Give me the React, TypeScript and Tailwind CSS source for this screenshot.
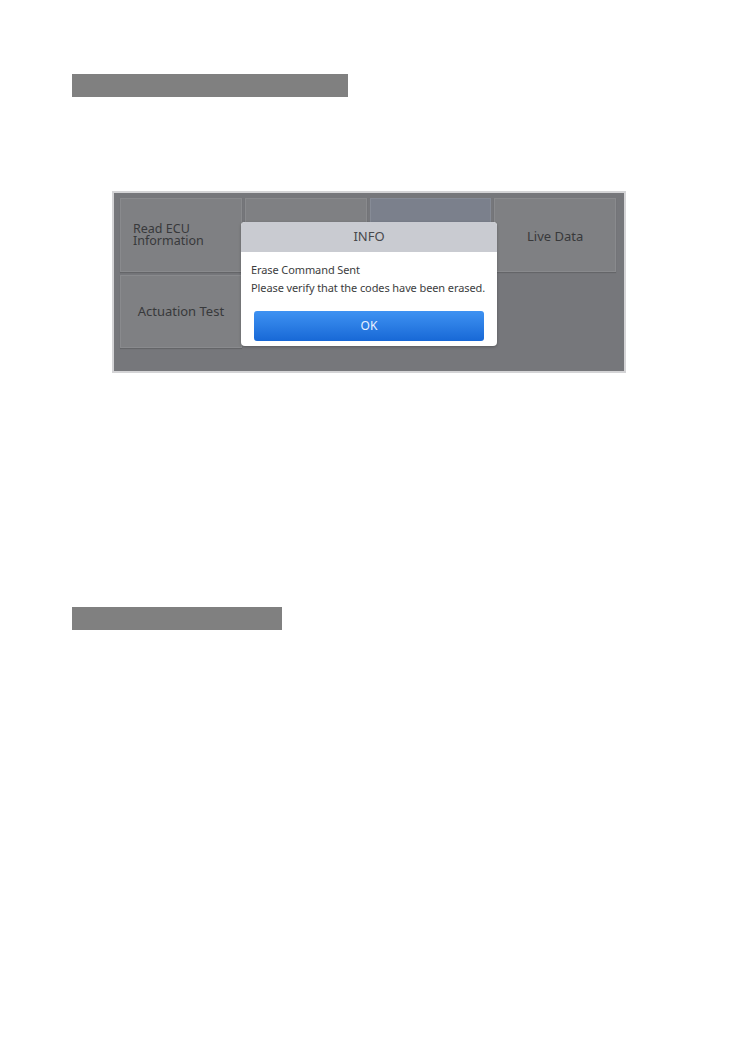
import React from "react";

const tile =
  "flex items-center bg-[#7f8083] border border-[#898a8d] shadow-[0_1px_1px_rgba(0,0,0,0.15)] text-[13px] text-[#38393b]";

export default function App() {
  return (
    <div className="min-h-[1043px] bg-white pl-[72px] pt-[74px]" style={{ fontFamily: '"Noto Sans", "Open Sans", sans-serif' }}>
      <div className="w-[276px] h-[23px] bg-[#808080]" />

      {/* Screenshot of the tool */}
      <div className="relative ml-[40px] mt-[94px] w-[514px] h-[182px] border-2 border-[#d4d4d6] bg-[#76777b] pl-[6px] pt-[5px] pr-[8px]">
        <div className="grid grid-cols-4 gap-[3px]">
          <div className={`${tile} h-[74px] px-[12px]`}>
            <span className="text-[12.5px] leading-[12.5px]">
              Read ECU
              <br />
              Information
            </span>
          </div>
          <div className={`${tile} h-[74px]`} />
          <div className="h-[74px] bg-[#7b808c] border border-[#868b96]" />
          <div className={`${tile} h-[74px] justify-center pt-[3px]`}>Live Data</div>
          <div className={`${tile} h-[73px] justify-center`}>Actuation Test</div>
        </div>

        {/* INFO dialog */}
        <div className="absolute left-[127px] top-[29px] w-[256px] rounded-[4px] overflow-hidden bg-white shadow-[0_1px_3px_rgba(0,0,0,0.25)]">
          <div className="h-[30px] bg-[#c9cbd1] flex items-center justify-center text-[13px] text-[#47484b]">INFO</div>
          <div className="px-[10px] pt-[9px] text-[11px] leading-[18px] tracking-[-0.1px] whitespace-nowrap text-[#3c3d40]">
            <div>Erase Command Sent</div>
            <div>Please verify that the codes have been erased.</div>
          </div>
          <div className="px-[13px] pt-[14px] pb-[5px]">
            <div className="h-[30px] rounded-[3px] bg-gradient-to-b from-[#3e92f2] to-[#1768d6] flex items-center justify-center text-[12px] text-[#e8f1ff]">
              OK
            </div>
          </div>
        </div>
      </div>

      <div className="mt-[234px] w-[210px] h-[23px] bg-[#808080]" />
    </div>
  );
}
